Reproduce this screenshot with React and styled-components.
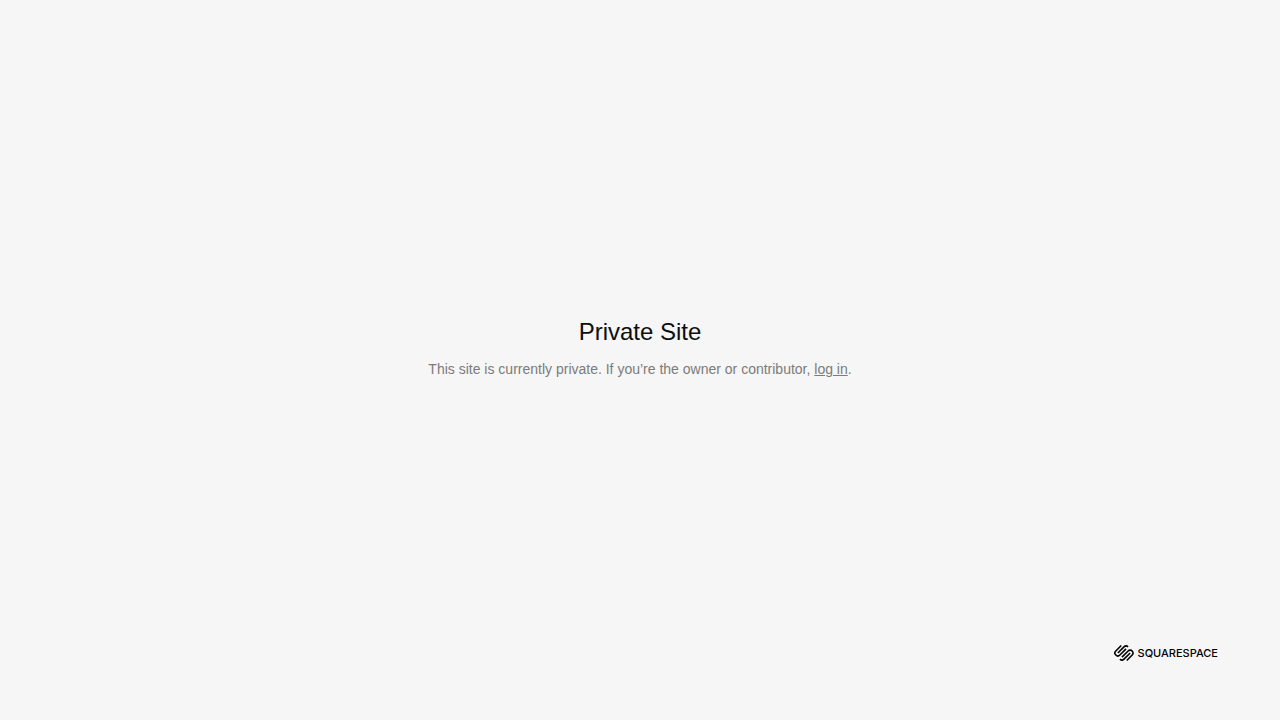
import React from "react";
import styled, { createGlobalStyle } from "styled-components";

const GlobalStyle = createGlobalStyle`
  * { box-sizing: border-box; }
  body {
    margin: 0;
    background: #f6f6f6;
    font-family: "Liberation Sans", Arial, sans-serif;
  }
`;

const Page = styled.div`
  min-height: 100vh;
  display: grid;
  grid-template-rows: 1fr auto 1fr;
  padding: 0 62px;
`;

const Message = styled.main`
  grid-row: 2;
  padding-bottom: 24px;
  text-align: center;
`;

const Title = styled.h1`
  margin: 0 0 12px;
  font-size: 24px;
  line-height: 30px;
  font-weight: 400;
  color: #0e0e0e;
`;

const Description = styled.p`
  margin: 0;
  font-size: 14px;
  line-height: 20px;
  color: #7b7b7b;
`;

const LoginLink = styled.a`
  color: inherit;
  text-decoration: underline;
`;

const Footer = styled.footer`
  grid-row: 3;
  align-self: end;
  display: flex;
  justify-content: flex-end;
  padding-bottom: 57px;
`;

const Brand = styled.a`
  display: flex;
  align-items: center;
  gap: 4px;
  color: #000;
  text-decoration: none;
`;

const Mark = styled.svg`
  width: 20px;
  height: 20px;
  fill: none;
  stroke: currentColor;
  stroke-width: 1.9;
`;

const Wordmark = styled.span`
  font-family: Inter, sans-serif;
  font-size: 11px;
  line-height: 20px;
  font-weight: 500;
`;

function SquarespaceMark() {
  return (
    <Mark viewBox="0 0 24 24" aria-hidden="true">
      <path d="M14.43 7.1 7.08 14.46A3.47 3.47 0 0 1 2.17 9.55L8.7 3" />
      <path d="M4.64 12.02 12 4.63A3.47 3.47 0 0 1 16.9 4.63" />
      <path d="M9.57 16.9 16.92 9.54A3.47 3.47 0 0 1 21.83 14.45L15.3 21" />
      <path d="M19.36 11.98 12 19.37A3.47 3.47 0 0 1 7.1 19.37" />
    </Mark>
  );
}

export default function App() {
  return (
    <>
      <GlobalStyle />
      <Page>
        <Message>
          <Title>Private Site</Title>
          <Description>
            This site is currently private. If you’re the owner or contributor,{" "}
            <LoginLink href="#login">log in</LoginLink>.
          </Description>
        </Message>
        <Footer>
          <Brand href="#squarespace">
            <SquarespaceMark />
            <Wordmark>SQUARESPACE</Wordmark>
          </Brand>
        </Footer>
      </Page>
    </>
  );
}
